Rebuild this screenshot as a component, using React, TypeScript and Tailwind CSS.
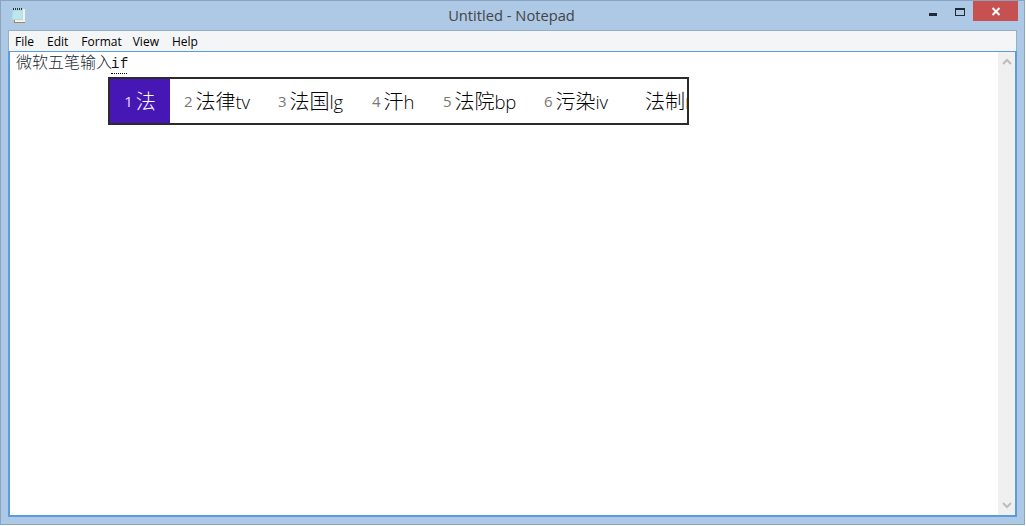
const CJK = '"Open Sans","Noto Sans CJK SC",sans-serif';

const candidates = [
  { n: "2", t: "法律", l: "tv", w: "w-[94px]" },
  { n: "3", t: "法国", l: "lg", w: "w-[94px]" },
  { n: "4", t: "汗", l: "h", w: "w-[71px]" },
  { n: "5", t: "法院", l: "bp", w: "w-[101px]" },
  { n: "6", t: "污染", l: "iv", w: "w-[101px]" },
];

function NotepadIcon() {
  return (
    <svg width="16" height="16" viewBox="0 0 16 16">
      <rect x="4" y="3" width="11" height="13" fill="#a08a5e" />
      <rect x="5" y="2" width="10" height="13" fill="#f5f3e6" />
      <path d="M3 2h10v11H1z" fill="#a9dbe2" />
      <path d="M3.5 5h9M3.2 7h9.3M3 9h9.5M2.6 11h10" stroke="#d6eff2" strokeWidth="1" />
      <path d="M3.5 1v2M5.5 1v2M7.5 1v2M9.5 1v2M11.5 1v2" stroke="#333" strokeWidth="1" />
    </svg>
  );
}

export default function App() {
  return (
    <div className="w-[1026px] h-[526px] bg-white overflow-hidden">
      <div className="w-[1025px] h-[525px] bg-[#adc9e6] border border-[#8aa3bf] flex flex-col">
        <div className="h-[29px] shrink-0 flex items-center relative">
          <div className="ml-[9px] -mt-[2px]"><NotepadIcon /></div>
          <div
            className="flex-1 text-center text-[14.7px] text-[#444444] pl-[68px]"
            style={{ fontFamily: '"Open Sans",sans-serif' }}
          >
            Untitled - Notepad
          </div>
          <div className="flex items-start self-start mr-[6px]">
            <div className="w-[8px] h-[3px] bg-[#1f2a33] mt-[12px] mr-[18px]" />
            <div className="w-[10px] h-[8px] border border-[#1f2a33] border-t-2 mt-[7px] mr-[8px]" />
            <div className="w-[45px] h-[20px] bg-[#c75050] flex items-center justify-center">
              <svg width="10" height="9" viewBox="0 0 10 9">
                <path d="M1.5 1 L8.5 8 M8.5 1 L1.5 8" stroke="#fff" strokeWidth="2" />
              </svg>
            </div>
          </div>
        </div>

        <div className="mx-[7px] mb-[7px] flex-1 flex flex-col min-h-0 relative">
          <div
            className="h-[21px] shrink-0 bg-[#f4f5f7] border-t border-x border-[#97aec8] flex items-center pt-[2px] pl-[6px] gap-[13px] text-[12px] text-black"
            style={{ fontFamily: '"Open Sans",sans-serif' }}
          >
            <span>File</span>
            <span>Edit</span>
            <span className="-mr-[2px]">Format</span>
            <span>View</span>
            <span>Help</span>
          </div>
          <div className="flex-1 min-h-0 border-2 border-[#5b9ce0] border-t bg-white flex">
            <div
              className="flex-1 pl-[6px] pt-[3px] text-[16px] leading-[18px] text-[#1c2833] font-light"
              style={{ fontFamily: '"Liberation Mono","Noto Sans CJK SC",monospace' }}
            >
              <span className="-mr-[1px]">微软五笔输入</span>
              <span className="border-b border-dotted border-black text-[14px] inline-block w-[16px] leading-[17px] text-[#111] tracking-[0.5px]">if</span>
            </div>
            <div className="w-[17px] bg-[#f0f0f0] flex flex-col justify-between items-center py-[6px]">
              <svg width="10" height="7" viewBox="0 0 10 7">
                <path d="M1 6 L5 2 L9 6" fill="none" stroke="#bdbdbd" strokeWidth="2" />
              </svg>
              <svg width="10" height="7" viewBox="0 0 10 7">
                <path d="M1 1 L5 5 L9 1" fill="none" stroke="#bdbdbd" strokeWidth="2" />
              </svg>
            </div>
          </div>

          <div
            className="absolute left-[100px] top-[47px] w-[581px] h-[48px] border-2 border-[#2b2b2b] bg-white flex items-center overflow-hidden whitespace-nowrap font-light"
            style={{ fontFamily: CJK }}
          >
            <div className="w-[60px] h-full shrink-0 bg-[#4617b4] text-white flex items-center justify-center text-[20px] pt-[1px]">
              <span className="text-[15px] font-normal mr-[3px] text-[#e5dcf7]">1</span>法
            </div>
            <div className="flex items-center pt-[1px]">
              {candidates.map((c) => (
                <div key={c.n} className={`${c.w} pl-[14px] shrink-0 flex items-center text-[20px] text-black`}>
                  <span className="text-[15px] font-normal text-[#777] mr-[3px]">{c.n}</span>
                  {c.t}
                  <span className="text-[18.5px] font-light tracking-[-0.3px]">{c.l}</span>
                </div>
              ))}
              <div className="shrink-0 pl-[14px] text-[20px] text-black">法制m</div>
            </div>
          </div>
        </div>
      </div>
    </div>
  );
}
